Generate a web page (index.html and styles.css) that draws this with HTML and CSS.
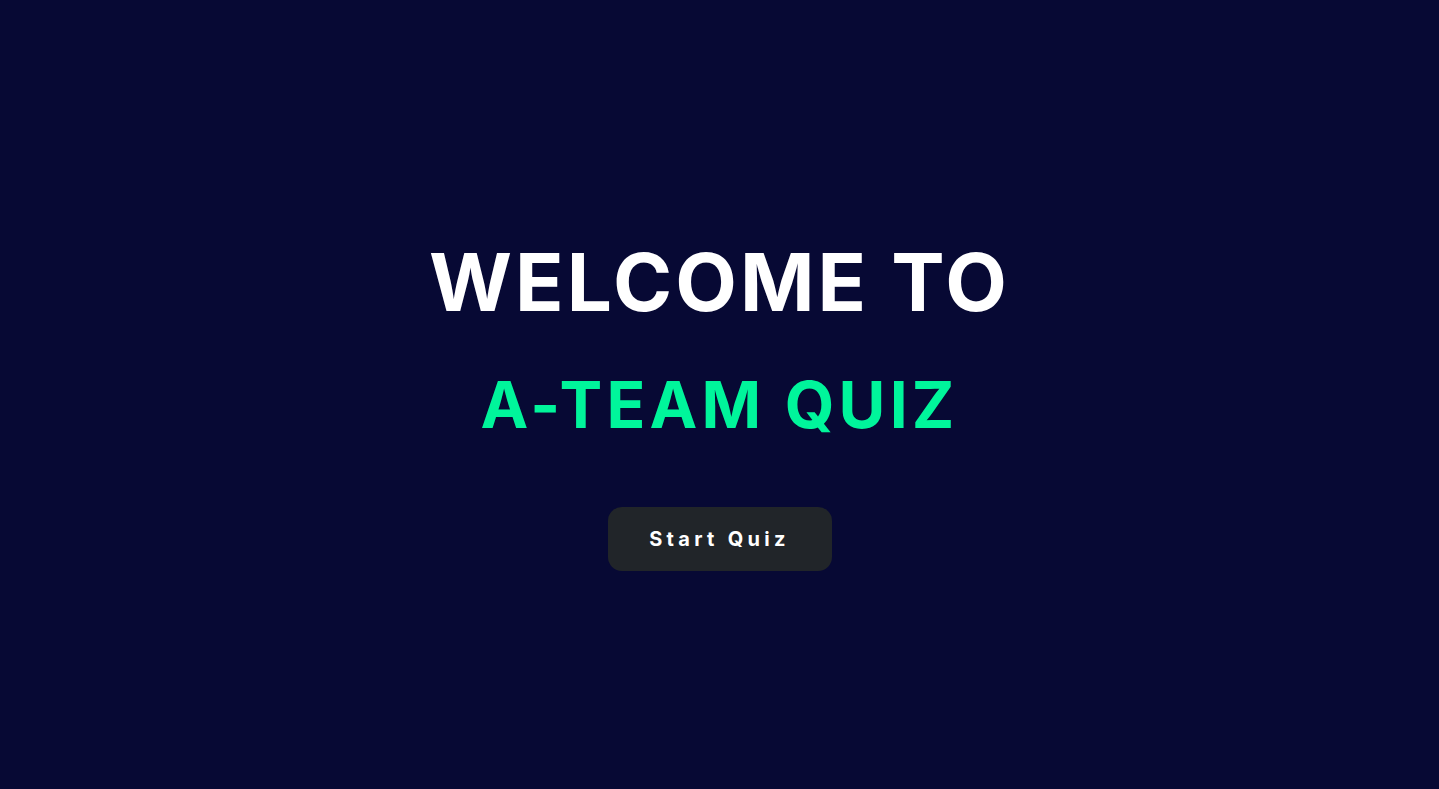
FILE: index.html
```html
<!DOCTYPE html>
<html lang="en">
<head>
<meta charset="utf-8">
<title>A-Team Quiz</title>
<link rel="stylesheet" href="styles.css">
</head>
<body>
<main class="welcome">
  <h1 class="title">WELCOME TO</h1>
  <h2 class="subtitle">A-TEAM QUIZ</h2>
  <button class="start-btn" type="button">Start Quiz</button>
</main>
</body>
</html>
```

FILE: styles.css
```css
html, body {
  margin: 0;
  padding: 0;
  height: 100%;
}
body {
  background: #070934;
  font-family: Inter, "Noto Sans", "Liberation Sans", sans-serif;
}
.welcome {
  height: 100%;
  display: flex;
  flex-direction: column;
  align-items: center;
  justify-content: flex-start;
  padding-top: 234px;
  box-sizing: border-box;
}
.title {
  margin: 0;
  color: #ffffff;
  font-size: 80px;
  font-weight: 700;
  letter-spacing: 3.1px;
  line-height: 1.2;
}
.subtitle {
  margin: 37px 0 0;
  color: #00f59b;
  font-size: 64px;
  font-weight: 700;
  letter-spacing: 4.2px;
  line-height: 1.2;
}
.start-btn {
  margin-top: 63px;
  width: 224px;
  height: 64px;
  border: none;
  border-radius: 14px;
  background: #212529;
  color: #ffffff;
  font-family: Inter, "Noto Sans", "Liberation Sans", sans-serif;
  font-size: 20px;
  font-weight: 700;
  letter-spacing: 4.3px;
  cursor: pointer;
}
```
